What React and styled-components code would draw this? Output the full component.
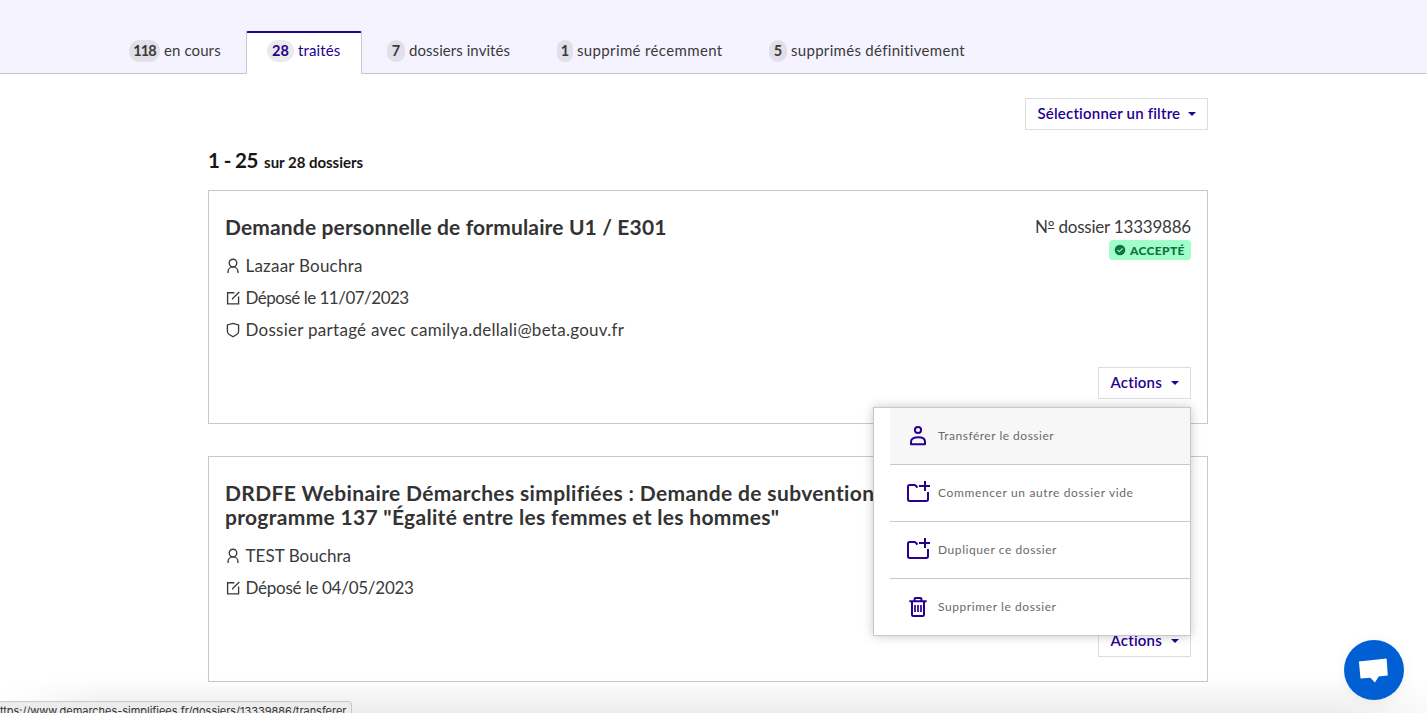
import React from 'react';
import styled, { createGlobalStyle, css } from 'styled-components';

const Global = createGlobalStyle`
  *, *::before, *::after { box-sizing: border-box; }
  html, body { margin: 0; height: 100%; overflow: hidden; }
  body { background: #fff; color: #3a3a3a; font-family: Lato, "Open Sans", sans-serif; font-variant-ligatures: none; }
  h2, h3, p, ul { margin: 0; padding: 0; font-weight: inherit; }
  button { font: inherit; }
  svg { display: block; flex: none; }
`;

const tracking = css`letter-spacing: ${(p) => p.$track || 0}px;`;

const Page = styled.div`
  position: relative;
  height: 713px;
  overflow: hidden;
`;

const TabBar = styled.nav`
  display: flex;
  align-items: flex-end;
  gap: 4px;
  height: 74px;
  padding-left: 108px;
  background: #f5f3ff;
  box-shadow: inset 0 -1px #c8c8c8;
`;

const Tab = styled.a`
  display: flex;
  align-items: center;
  gap: 4px;
  width: ${(p) => p.$width}px;
  height: 43px;
  padding: 0 0 3px ${(p) => (p.$active ? 20 : 21)}px;
  font-size: 15px;
  line-height: 22px;
  white-space: nowrap;
  ${tracking}
  ${(p) => p.$active && css`
    margin-left: -4px;
    padding-bottom: 5px;
    background: #fff;
    color: #270092;
    border: 1px solid #c8c8c8;
    border-top: 2px solid #270092;
    border-bottom: 0;
    border-radius: 2px 2px 0 0;
  `}
`;

const TabLabel = styled.span`
  padding-bottom: 2px;
`;

const Count = styled.span`
  width: ${(p) => p.$width}px;
  height: 22px;
  border-radius: 11px;
  background: ${(p) => (p.$active ? '#eaeaea' : '#e1dfe8')};
  font-size: 14.5px;
  font-weight: 700;
  text-align: center;
  letter-spacing: ${(p) => p.$track}px;
`;

const Content = styled.main`
  width: 1000px;
  margin-left: 208px;
  padding-top: 24px;
`;

const FilterRow = styled.div`
  display: flex;
  justify-content: flex-end;
`;

const DropButton = styled.button`
  display: flex;
  align-items: center;
  justify-content: space-between;
  width: ${(p) => p.$width}px;
  height: 32px;
  padding: 0 11px;
  border: 1px solid #dddddd;
  border-radius: 0;
  background: #fff;
  color: #270092;
  font-size: 15px;
  font-weight: 600;
  line-height: 24px;
  white-space: nowrap;
  ${tracking}
`;

const ButtonLabel = styled.span`
  padding: 0 0 2px 0.5px;
`;

const Caret = () => (
  <svg width="8" height="4" viewBox="0 0 8 4"><path d="M0 0h8L4 4z" fill="currentColor" /></svg>
);

const Summary = styled.h2`
  height: 60px;
  padding-top: 16px;
  color: #161616;
  font-size: 20.5px;
  font-weight: 700;
  line-height: 28px;
  letter-spacing: -0.6px;
`;

const SummarySmall = styled.span`
  margin-left: 2px;
  font-size: 15px;
  letter-spacing: -0.02px;
`;

const Card = styled.article`
  display: flex;
  flex-direction: column;
  height: ${(p) => p.$height}px;
  margin-bottom: 32px;
  padding: 24px 16px;
  border: 1px solid #c8c8c8;
`;

const CardTop = styled.header`
  display: flex;
  justify-content: space-between;
  height: ${(p) => p.$height}px;
  margin-bottom: 11px;
`;

const CardTitle = styled.h3`
  color: #333;
  font-size: 21px;
  font-weight: 700;
  line-height: 24px;
  white-space: nowrap;
`;

const TitleLine = styled.span`
  display: block;
  ${tracking}
`;

const FileInfo = styled.div`
  display: flex;
  flex-direction: column;
  align-items: flex-end;
`;

const FileNumber = styled.p`
  flex: none;
  height: 25px;
  font-size: 17px;
  line-height: 23px;
  white-space: nowrap;
  ${tracking}
`;

const Ordinal = styled.span`
  text-decoration: underline;
  text-decoration-thickness: 1px;
  text-underline-offset: -5px;
  text-decoration-skip-ink: none;
`;

const Badge = styled.p`
  display: flex;
  flex: none;
  align-items: center;
  gap: 4px;
  width: 82px;
  height: 20px;
  padding-left: 5px;
  border-radius: 4px;
  background: #a1fdc9;
  color: #0b7440;
  font-size: 12px;
  font-weight: 900;
  letter-spacing: 0.35px;
`;

const Detail = styled.p`
  display: flex;
  align-items: center;
  gap: 5.5px;
  height: 32px;
  font-size: 17px;
  line-height: 32px;
  white-space: nowrap;
  ${tracking}
`;

const Actions = styled.div`
  position: relative;
  align-self: flex-end;
  margin-top: auto;
`;

const Menu = styled.ul`
  position: absolute;
  z-index: 5;
  top: 40px;
  right: 0;
  width: 318px;
  padding-left: 16px;
  border: 1px solid #c8c8c8;
  background: #fff;
  box-shadow: 0 0 10px rgba(0, 0, 0, 0.22);
  list-style: none;
`;

const MenuItem = styled.li`
  display: flex;
  align-items: center;
  gap: 8px;
  height: 57px;
  padding-left: 16px;
  border-bottom: 1px solid #c8c8c8;
  background: ${(p) => (p.$hover ? '#f7f7f7' : '#fff')};
  color: #6a6a6a;
  font-size: 12px;
  &:last-child { height: 56px; border-bottom: 0; }
  svg { color: #270092; }
`;

const MenuLabel = styled.span`
  padding-bottom: 2px;
  white-space: nowrap;
  ${tracking}
`;

const Shade = styled.div`
  position: absolute;
  inset: auto 0 0 0;
  height: 36px;
  background: linear-gradient(to bottom, rgba(0, 0, 0, 0), rgba(0, 0, 0, 0.075));
  mask-image: linear-gradient(to right, transparent, #000 100px, #000 1327px, rgba(0, 0, 0, 0.3));
  pointer-events: none;
`;

const StatusBar = styled.div`
  position: absolute;
  left: -1px;
  bottom: 0;
  width: 353px;
  height: 12px;
  overflow: hidden;
  border: 1px solid #cacaca;
  border-bottom: 0;
  border-radius: 0 4px 0 0;
  background: #ececec;
  color: #333;
  font: 11px/19px Inter, sans-serif;
  letter-spacing: -0.03px;
  white-space: nowrap;
`;

const ChatButton = styled.button`
  position: absolute;
  right: 23px;
  bottom: 13px;
  display: grid;
  place-items: center;
  width: 60px;
  height: 60px;
  padding: 0;
  border: 0;
  border-radius: 50%;
  background: #0060d3;
  box-shadow: 0 2px 14px rgba(0, 0, 0, 0.06);
`;

const smallStroke = { fill: 'none', stroke: 'currentColor', strokeWidth: 1.35 };

const Person = () => (
  <svg width="15" height="16" viewBox="0 0 15 16" {...smallStroke}>
    <circle cx="8" cy="5" r="3.8" />
    <path d="M3 15v-1.1c0-2.8 2-5 5-5s5 2.2 5 5V15" />
  </svg>
);

const Edit = () => (
  <svg width="15" height="16" viewBox="0 0 15 16" {...smallStroke}>
    <path d="M9.4 2.7H2.6v11.1h11V6.6M14.3 1.9 7.6 8.6v1" />
  </svg>
);

const Shield = () => (
  <svg width="15" height="16" viewBox="0 0 15 16" {...smallStroke}>
    <path d="M8 1.4 13.6 2.9v6.3c0 1.3-.5 2.3-1.5 3L8 14.8l-4.1-2.6c-1-.7-1.5-1.7-1.5-3V2.9z" />
  </svg>
);

const CheckMark = () => (
  <svg width="12" height="12" viewBox="0 0 12 12">
    <circle cx="6" cy="6" r="5.3" fill="currentColor" />
    <path d="m3.5 6 1.8 1.8 3.3-3.4" fill="none" stroke="#a1fdc9" strokeWidth="1.1" />
  </svg>
);

const UserIcon = () => (
  <svg width="24" height="24" viewBox="0 0 24 24" fill="none" stroke="currentColor" strokeWidth="2">
    <circle cx="12" cy="6" r="3.1" />
    <path d="M5 20.3v-2.6c0-2.8 3-4.4 7-4.4s7 1.6 7 4.4v2.6z" strokeLinejoin="round" />
  </svg>
);

const FolderPlus = () => (
  <svg width="24" height="24" viewBox="0 0 24 24" fill="none" stroke="currentColor" strokeWidth="2">
    <path d="M11.2 6.7 10.6 5.5 8.8 4H3.7C2.5 4 2 4.6 2 5.7v12.6c0 1.1.5 1.7 1.7 1.7h16.6c1.2 0 1.7-.6 1.7-1.7V11" />
    <path d="M19 0v10M13 5h11" />
  </svg>
);

const Trash = () => (
  <svg width="24" height="24" viewBox="0 0 24 24" fill="none" stroke="currentColor" strokeWidth="2">
    <path d="M3.3 6.2h17.4M8.6 6V3.8c0-.5.3-.8.8-.8h5.2c.5 0 .8.3.8.8V6M6 6.2v13.6c0 .8.4 1.2 1.2 1.2h9.6c.8 0 1.2-.4 1.2-1.2V6.2" />
    <path d="M9 10v7M12 10v7M15 10v7" strokeWidth="1.7" />
  </svg>
);

const ChatIcon = () => (
  <svg width="32" height="28" viewBox="0 0 32 28">
    <path d="M.9 5.5 28.6 2.4 29.8 19.4 20.7 20.6 16.9 26.4 12.4 21.7 2.5 22.6z" fill="#fff" />
  </svg>
);

const tabs = [
  { count: '118', label: 'en cours', width: 138, pill: 31, track: 0.1, countTrack: -0.9 },
  { count: '28', label: 'traités', width: 116, pill: 27, track: 0.12, countTrack: 0.2, active: true },
  { count: '7', label: 'dossiers invités', width: 166, pill: 18, track: 0.06 },
  { count: '1', label: 'supprimé récemment', width: 208, pill: 16, track: 0.36 },
  { count: '5', label: 'supprimés définitivement', width: 220, pill: 18, track: 0.3 },
];

const menuItems = [
  { Icon: UserIcon, label: 'Transférer le dossier', track: 0.5, hover: true },
  { Icon: FolderPlus, label: 'Commencer un autre dossier vide', track: 0.64 },
  { Icon: FolderPlus, label: 'Dupliquer ce dossier', track: 0.57 },
  { Icon: Trash, label: 'Supprimer le dossier', track: 0.58 },
];

const ActionsButton = () => (
  <DropButton $width={93} $track={0.2}><ButtonLabel>Actions</ButtonLabel><Caret /></DropButton>
);

export default function App() {
  return (
    <Page>
      <Global />
      <TabBar>
        {tabs.map((t) => (
          <Tab key={t.label} $width={t.width} $track={t.track} $active={t.active}>
            <Count $width={t.pill} $track={t.countTrack || 0} $active={t.active}>{t.count}</Count>
            <TabLabel>{t.label}</TabLabel>
          </Tab>
        ))}
      </TabBar>
      <Content>
        <FilterRow>
          <DropButton $width={183} $track={0.2}><ButtonLabel>Sélectionner un filtre</ButtonLabel><Caret /></DropButton>
        </FilterRow>
        <Summary>1 - 25 <SummarySmall>sur 28 dossiers</SummarySmall></Summary>
        <Card $height={234}>
          <CardTop $height={24}>
            <CardTitle><TitleLine $track={0.14}>Demande personnelle de formulaire U1 / E301</TitleLine></CardTitle>
            <FileInfo>
              <FileNumber $track={-0.22}>N<Ordinal>º</Ordinal> dossier 13339886</FileNumber>
              <Badge><CheckMark />ACCEPTÉ</Badge>
            </FileInfo>
          </CardTop>
          <Detail $track={0.22}><Person />Lazaar Bouchra</Detail>
          <Detail $track={-0.5}><Edit />Déposé le 11/07/2023</Detail>
          <Detail $track={0.27}><Shield />Dossier partagé avec camilya.dellali@beta.gouv.fr</Detail>
          <Actions>
            <ActionsButton />
            <Menu>
              {menuItems.map(({ Icon, label, track, hover }) => (
                <MenuItem key={label} $hover={hover}>
                  <Icon />
                  <MenuLabel $track={track}>{label}</MenuLabel>
                </MenuItem>
              ))}
            </Menu>
          </Actions>
        </Card>
        <Card $height={226}>
          <CardTop $height={48}>
            <CardTitle>
              <TitleLine $track={0.36}>DRDFE Webinaire Démarches simplifiées : Demande de subvention</TitleLine>
              <TitleLine $track={0.31}>programme 137 "Égalité entre les femmes et les hommes"</TitleLine>
            </CardTitle>
          </CardTop>
          <Detail $track={0.04}><Person />TEST Bouchra</Detail>
          <Detail $track={-0.25}><Edit />Déposé le 04/05/2023</Detail>
          <Actions><ActionsButton /></Actions>
        </Card>
      </Content>
      <Shade />
      <StatusBar>ttps://www.demarches-simplifiees.fr/dossiers/13339886/transferer</StatusBar>
      <ChatButton aria-label="Chat"><ChatIcon /></ChatButton>
    </Page>
  );
}
